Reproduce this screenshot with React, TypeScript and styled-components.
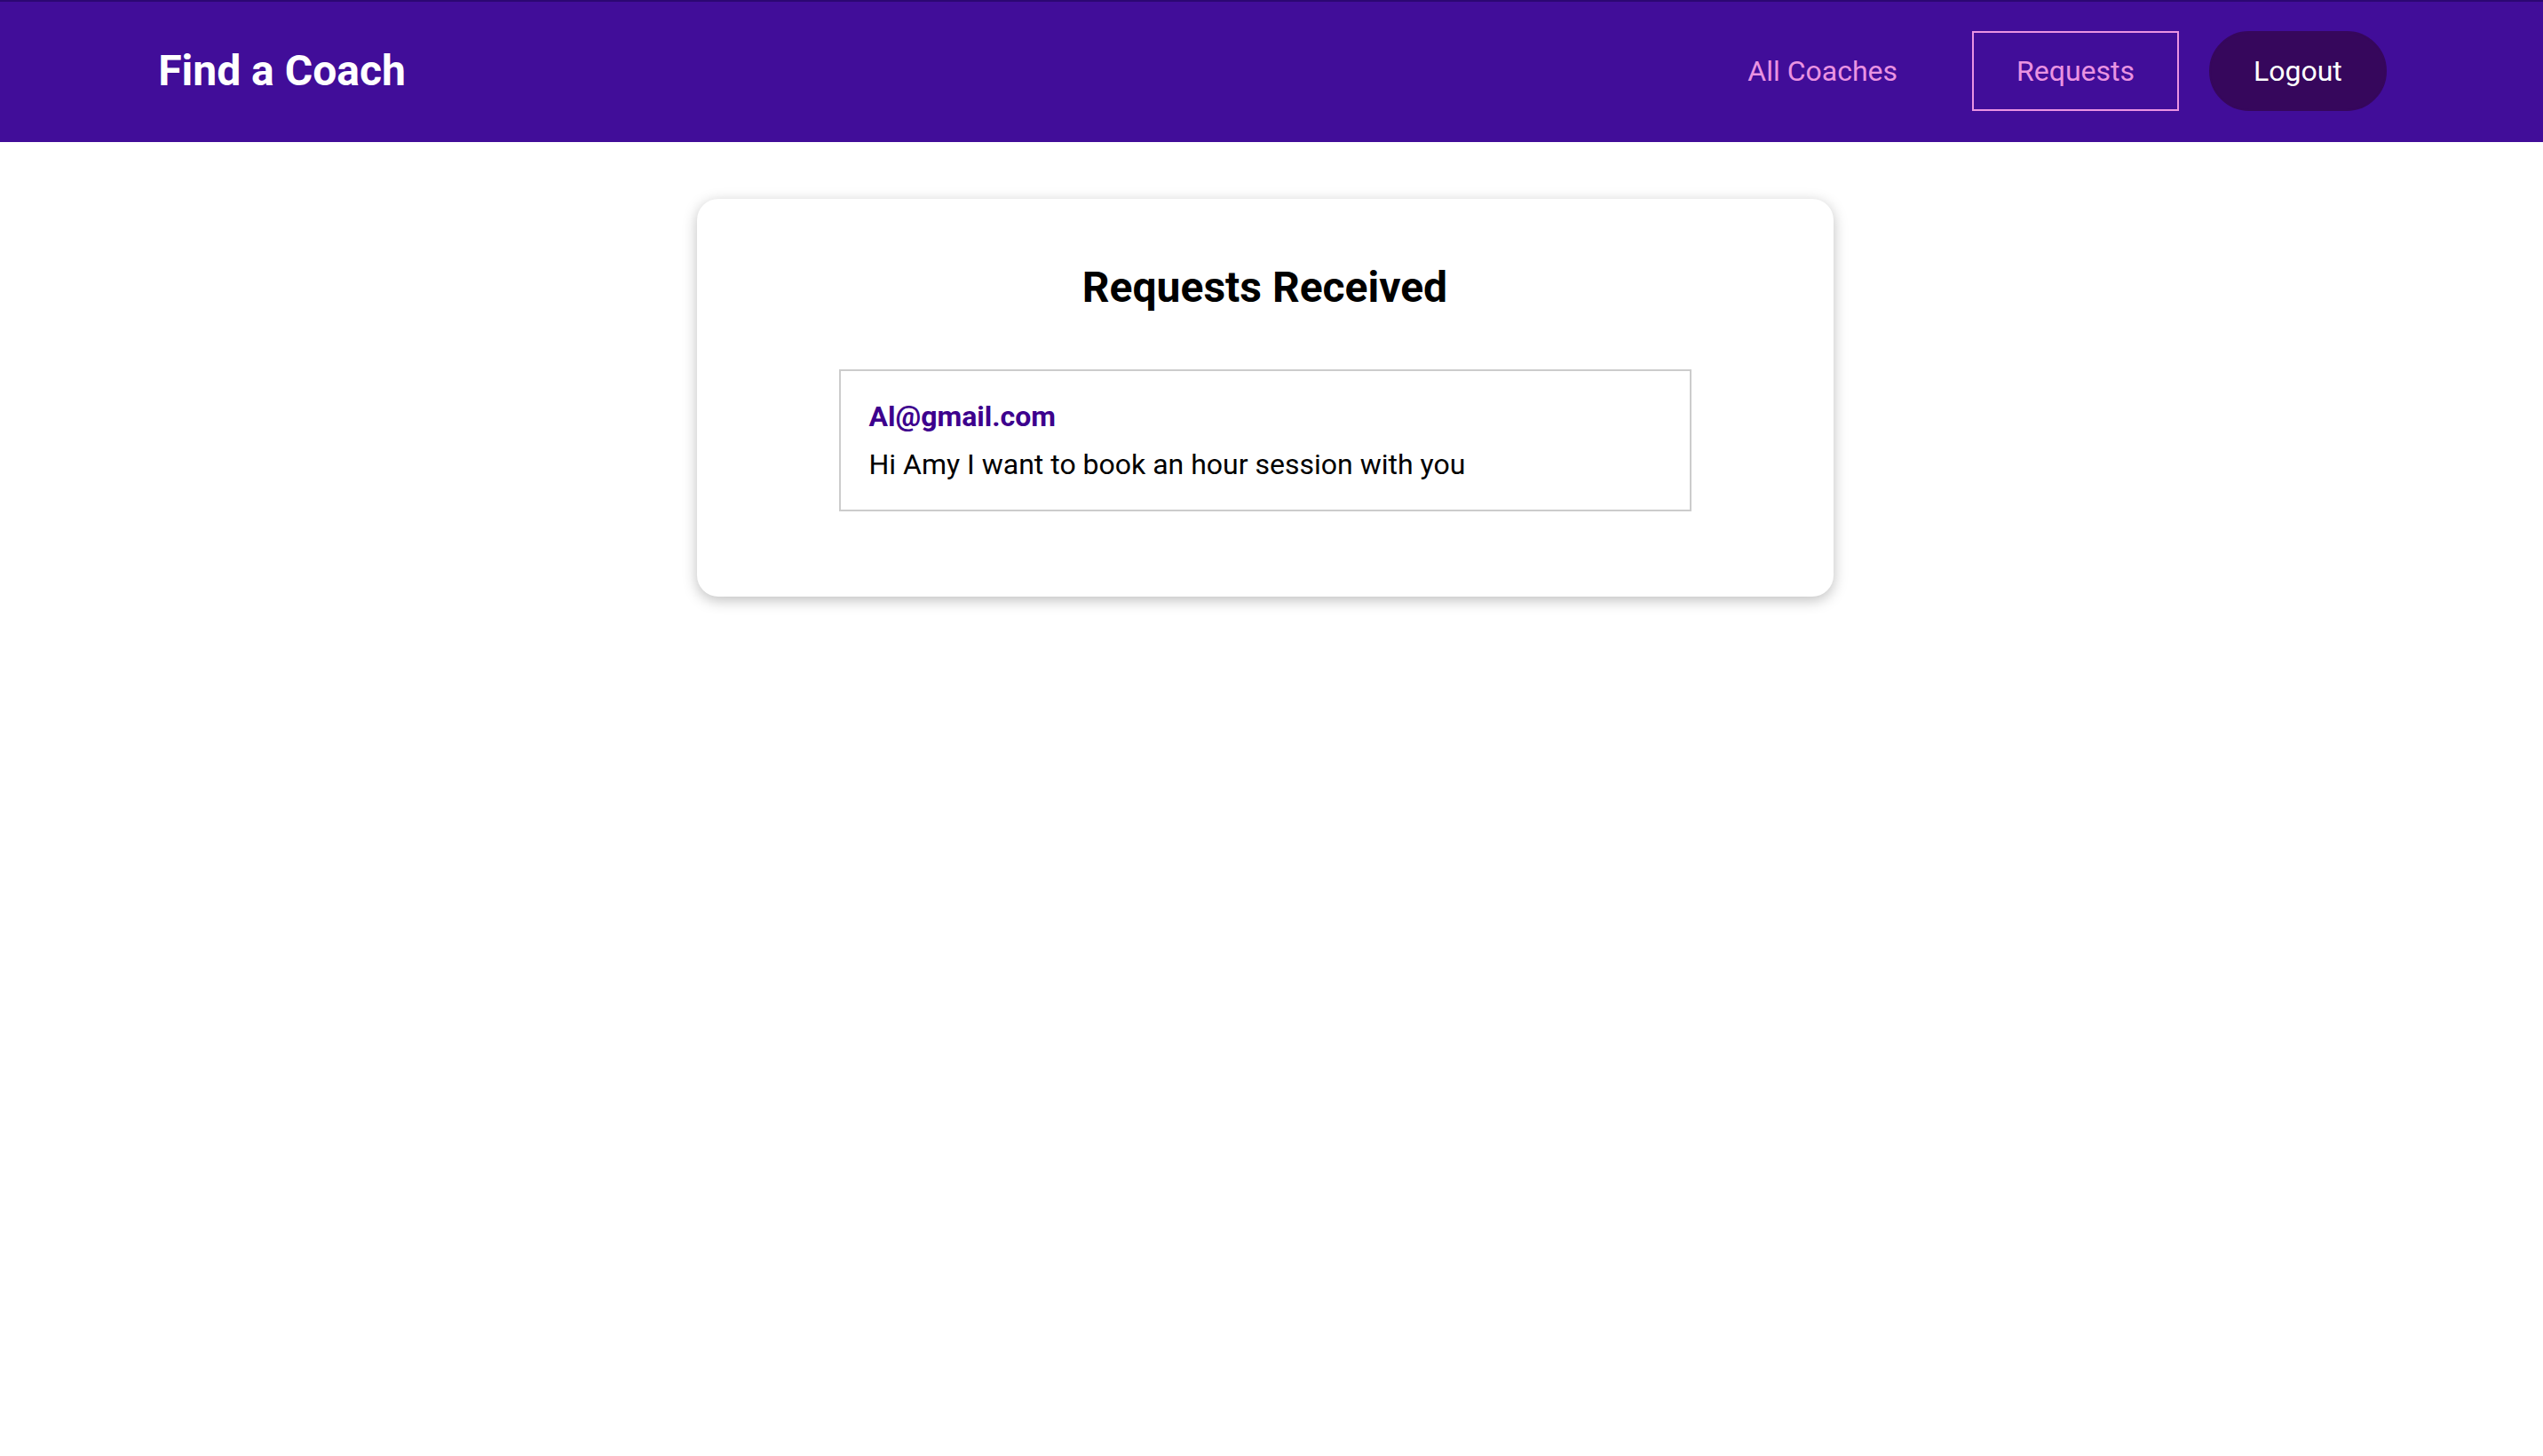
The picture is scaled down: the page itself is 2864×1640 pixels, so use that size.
import React from 'react';
import styled, { createGlobalStyle } from 'styled-components';

const GlobalStyle = createGlobalStyle`
  * {
    box-sizing: border-box;
  }
  html {
    font-family: Roboto, "Liberation Sans", sans-serif;
    font-size: 32px;
  }
  body {
    margin: 0;
    background: #ffffff;
  }
`;

const Header = styled.header`
  width: 100%;
  height: 160px;
  background-color: #410d99;
  border-top: 2px solid #2c0772;
  padding-bottom: 3px;
  display: flex;
  justify-content: center;
  align-items: center;
`;

const Nav = styled.nav`
  width: 90%;
  margin: auto;
  display: flex;
  justify-content: space-between;
  align-items: center;
`;

const Title = styled.h1`
  margin: 0;
  font-size: 48px;
  font-weight: 700;
`;

const TitleLink = styled.a`
  display: inline-block;
  color: #ffffff;
  text-decoration: none;
  padding: 24px 35px;
`;

const NavList = styled.ul`
  list-style: none;
  margin: 0;
  padding: 0;
  display: flex;
  align-items: center;
`;

const NavItem = styled.li`
  margin: 0 17px;
`;

const NavLink = styled.a<{ $active?: boolean }>`
  display: inline-block;
  text-decoration: none;
  color: #ea93e2;
  padding: 24px 48px;
  border: 2px solid ${(p) => (p.$active ? '#ea93e2' : 'transparent')};
  font-size: 32px;
`;

const LogoutButton = styled.button`
  font: inherit;
  font-size: 32px;
  padding: 24px 48px;
  background-color: #36075c;
  border: 2px solid #36075c;
  color: #ffffff;
  border-radius: 60px;
  margin-right: 16px;
  cursor: pointer;
`;

const Main = styled.main`
  padding-right: 15px;
`;

const Card = styled.section`
  max-width: 1280px;
  margin: 64px auto;
  padding: 32px;
  border-radius: 24px;
  background: #ffffff;
  box-shadow: 0 4px 16px rgba(0, 0, 0, 0.26);
`;

const CardHeader = styled.header`
  text-align: center;
`;

const Heading = styled.h2`
  font-size: 48px;
  font-weight: 700;
  color: #000000;
  margin: 39px 0;
`;

const RequestList = styled.ul`
  list-style: none;
  margin: 64px auto;
  padding: 0;
  max-width: 960px;
`;

const RequestItem = styled.li`
  margin: 32px 0;
  border: 2px solid #cccccc;
  padding: 32px;
`;

const Email = styled.a`
  color: #3d008d;
  text-decoration: none;
  font-weight: 700;
  font-size: 32px;
`;

const Message = styled.p`
  margin: 16px 0 0;
  font-size: 32px;
  color: #000000;
`;

const requests = [
  { id: 'r1', email: 'Al@gmail.com', message: 'Hi Amy I want to book an hour session with you' },
];

export default function App() {
  return (
    <>
      <GlobalStyle />
      <Header>
        <Nav>
          <Title>
            <TitleLink href="#">Find a Coach</TitleLink>
          </Title>
          <NavList>
            <NavItem>
              <NavLink href="#">All Coaches</NavLink>
            </NavItem>
            <NavItem>
              <NavLink href="#" $active>Requests</NavLink>
            </NavItem>
            <NavItem>
              <LogoutButton>Logout</LogoutButton>
            </NavItem>
          </NavList>
        </Nav>
      </Header>
      <Main>
        <Card>
          <CardHeader>
            <Heading>Requests Received</Heading>
          </CardHeader>
          <RequestList>
            {requests.map((r) => (
              <RequestItem key={r.id}>
                <div>
                  <Email href={`mailto:${r.email}`}>{r.email}</Email>
                </div>
                <Message>{r.message}</Message>
              </RequestItem>
            ))}
          </RequestList>
        </Card>
      </Main>
    </>
  );
}
